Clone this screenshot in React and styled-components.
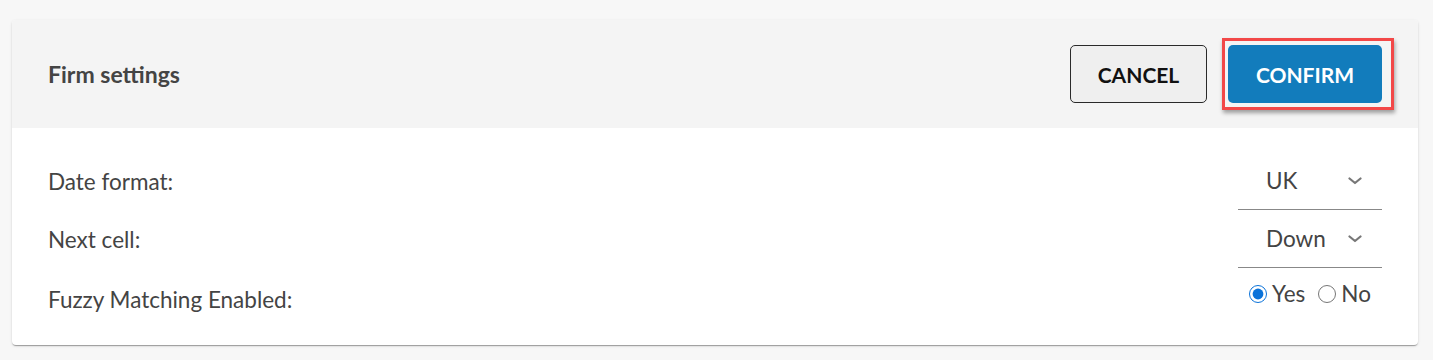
import React from "react";
import styled, { createGlobalStyle } from "styled-components";

const Global = createGlobalStyle`
  html, body { margin: 0; padding: 0; background: #f7f7f7; }
  body { font-family: Lato, "Open Sans", sans-serif; }
`;

const Page = styled.div`
  padding: 20px 15px 15px 12px;
`;

const Card = styled.section`
  background: #fff;
  border-radius: 4px;
  box-shadow: 0 2px 1px -1px rgba(0,0,0,.2), 0 1px 1px 0 rgba(0,0,0,.14), 0 1px 3px 0 rgba(0,0,0,.12);
`;

const Header = styled.header`
  height: 108px;
  background: #f4f4f4;
  border-radius: 4px 4px 0 0;
  display: flex;
  align-items: center;
  justify-content: space-between;
  padding: 0 36px;
`;

const Title = styled.h2`
  margin: 0;
  font-size: 23px;
  font-weight: 700;
  color: #444;
`;

const Actions = styled.div`
  display: flex;
  align-items: center;
  gap: 21px;
`;

const Button = styled.button`
  height: 58px;
  padding: 0;
  width: ${(p) => p.$w}px;
  font-family: Lato, sans-serif;
  font-size: 21px;
  font-weight: 700;
  border-radius: 5px;
  cursor: pointer;
  border: ${(p) => (p.$primary ? "none" : "1px solid #2a2a2a")};
  background: ${(p) => (p.$primary ? "#127cbc" : "#efefef")};
  color: ${(p) => (p.$primary ? "#fff" : "#111")};
`;

const Highlight = styled.div`
  position: relative;
  display: flex;
`;

const HighlightFrame = styled.span`
  position: absolute;
  top: -7px;
  bottom: -7px;
  left: -6px;
  right: -12px;
  border: 3px solid #f24848;
  box-shadow: 1px 3px 4px rgba(0,0,0,.35);
  pointer-events: none;
`;

const Body = styled.div`
  padding: 24px 36px 19px;
`;

const Row = styled.div`
  display: flex;
  justify-content: space-between;
  align-items: center;
  height: 58px;
`;

const Label = styled.span`
  font-size: 22.5px;
  color: #444;
  padding-top: ${(p) => p.$pt || 0}px;
`;

const Select = styled.div`
  box-sizing: border-box;
  width: 144px;
  height: 58px;
  border-bottom: 1px solid #888;
  display: flex;
  align-items: center;
  justify-content: space-between;
  padding: 0 20px 0 28px;
  font-size: 22.5px;
  color: #444;
`;

const RadioGroup = styled.div`
  width: 144px;
  display: flex;
  justify-content: center;
  align-items: center;
  gap: 13px;
  margin-top: -7px;
`;

const RadioOption = styled.label`
  display: flex;
  align-items: center;
  gap: 5px;
  font-size: 22.5px;
  color: #444;
`;

const Radio = styled.input`
  width: 18px;
  height: 18px;
  margin: 0;
  accent-color: #0a72d9;
`;

const Chevron = () => (
  <svg width="14" height="8" viewBox="0 0 14 8" fill="none">
    <path d="M1.5 1.5 L7 6 L12.5 1.5" stroke="#777" strokeWidth="2.2" strokeLinecap="round" strokeLinejoin="round" />
  </svg>
);

export default function App() {
  return (
    <>
      <Global />
      <Page>
        <Card>
          <Header>
            <Title>Firm settings</Title>
            <Actions>
              <Button $w={137}>CANCEL</Button>
              <Highlight>
                <Button $primary $w={154}>CONFIRM</Button>
                <HighlightFrame />
              </Highlight>
            </Actions>
          </Header>
          <Body>
            <Row>
              <Label>Date format:</Label>
              <Select>
                <span>UK</span>
                <Chevron />
              </Select>
            </Row>
            <Row>
              <Label>Next cell:</Label>
              <Select>
                <span>Down</span>
                <Chevron />
              </Select>
            </Row>
            <Row>
              <Label $pt={4}>Fuzzy Matching Enabled:</Label>
              <RadioGroup>
                <RadioOption>
                  <Radio type="radio" name="fuzzy" defaultChecked />
                  Yes
                </RadioOption>
                <RadioOption>
                  <Radio type="radio" name="fuzzy" />
                  No
                </RadioOption>
              </RadioGroup>
            </Row>
          </Body>
        </Card>
      </Page>
    </>
  );
}
